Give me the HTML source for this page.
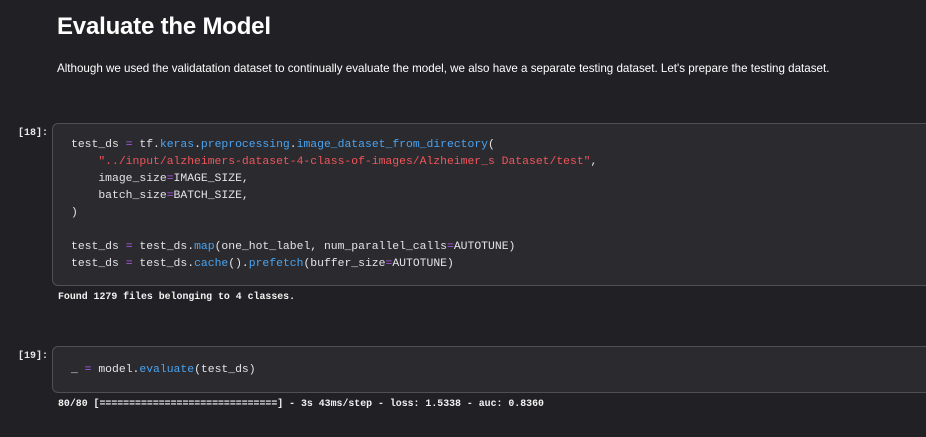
<!DOCTYPE html>
<html><head><style>
body{margin:0;width:926px;height:437px;background:#212125;overflow:hidden;position:relative;font-family:"Liberation Sans",sans-serif}
h1{position:absolute;left:57px;top:13px;margin:0;font-size:24px;font-weight:bold;color:#fff;letter-spacing:-0.2px}
p{position:absolute;left:57px;top:62px;margin:0;font-size:11.6px;color:#fff}
.cell{position:absolute;left:52px;width:890px;background:#2b2b2f;border:1px solid #4f4f55;border-radius:6px;box-sizing:border-box}
.code{position:absolute;left:71px;font-family:"Liberation Mono",monospace;font-size:11.4px;line-height:17px;color:#e4e4e8;white-space:pre}
.p{position:absolute;left:18px;font-family:"Liberation Mono",monospace;font-size:10px;font-weight:bold;color:#e8e8e8}
.out{position:absolute;left:58px;font-family:"Liberation Mono",monospace;font-size:9.9px;font-weight:bold;color:#f2f2f2;white-space:pre}
.b{color:#4aa3f0}.s{color:#f0555a}.o{color:#b05cf0}
</style></head><body>
<h1>Evaluate the Model</h1>
<p>Although we used the validatation dataset to continually evaluate the model, we also have a separate testing dataset. Let's prepare the testing dataset.</p>
<div class="p" style="top:128px">[18]:</div>
<div class="cell" style="top:123px;height:163px"></div>
<div class="code" style="top:137px">test_ds <span class="o">=</span> tf.<span class="b">keras</span>.<span class="b">preprocessing</span>.<span class="b">image_dataset_from_directory</span>(
    <span class="s">"../input/alzheimers-dataset-4-class-of-images/Alzheimer_s Dataset/test"</span>,
    image_size<span class="o">=</span>IMAGE_SIZE,
    batch_size<span class="o">=</span>BATCH_SIZE,
)

test_ds <span class="o">=</span> test_ds.<span class="b">map</span>(one_hot_label, num_parallel_calls<span class="o">=</span>AUTOTUNE)
test_ds <span class="o">=</span> test_ds.<span class="b">cache</span>().<span class="b">prefetch</span>(buffer_size<span class="o">=</span>AUTOTUNE)</div>
<div class="out" style="top:291px">Found 1279 files belonging to 4 classes.</div>
<div class="p" style="top:351px">[19]:</div>
<div class="cell" style="top:346px;height:47px"></div>
<div class="code" style="top:362px">_ <span class="o">=</span> model.<span class="b">evaluate</span>(test_ds)</div>
<div class="out" style="top:398px">80/80 [==============================] - 3s 43ms/step - loss: 1.5338 - auc: 0.8360</div>
</body></html>
